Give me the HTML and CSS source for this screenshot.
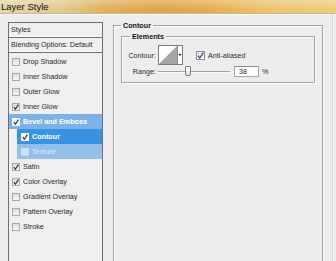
FILE: index.html
```html
<!DOCTYPE html>
<html>
<head>
<meta charset="utf-8">
<title>Layer Style</title>
<link rel="stylesheet" href="styles.css">
</head>
<body>
<div class="window">
  <div class="titlebar">Layer Style</div>
  <div class="client">
    <div class="sidebar">
      <div class="head">Styles</div>
      <div class="head">Blending Options: Default</div>
      <ul class="fx">
        <li><span class="cb"></span>Drop Shadow</li>
        <li><span class="cb"></span>Inner Shadow</li>
        <li><span class="cb"></span>Outer Glow</li>
        <li><span class="cb on"><svg viewBox="0 0 6 6"><path d="M0.8 3.2 L2.4 5.2 L5.4 0.6"/></svg></span>Inner Glow</li>
        <li class="sel1"><span class="cb on"><svg viewBox="0 0 6 6"><path d="M0.8 3.2 L2.4 5.2 L5.4 0.6"/></svg></span>Bevel and Emboss</li>
        <li class="sub sel2"><span class="cb on"><svg viewBox="0 0 6 6"><path d="M0.8 3.2 L2.4 5.2 L5.4 0.6"/></svg></span>Contour</li>
        <li class="sub sel3"><span class="cb"></span>Texture</li>
        <li><span class="cb on"><svg viewBox="0 0 6 6"><path d="M0.8 3.2 L2.4 5.2 L5.4 0.6"/></svg></span>Satin</li>
        <li><span class="cb on"><svg viewBox="0 0 6 6"><path d="M0.8 3.2 L2.4 5.2 L5.4 0.6"/></svg></span>Color Overlay</li>
        <li><span class="cb"></span>Gradient Overlay</li>
        <li><span class="cb"></span>Pattern Overlay</li>
        <li><span class="cb"></span>Stroke</li>
      </ul>
    </div>
    <fieldset class="group outer">
      <legend>Contour</legend>
      <fieldset class="group inner">
        <legend>Elements</legend>
        <div class="row r1">
          <span class="lbl">Contour:</span>
          <div class="preview">
            <svg width="25" height="20" viewBox="0 0 25 20">
              <rect x="0.5" y="0.5" width="24" height="19" fill="#fff" stroke="#7c7c7c"/>
              <polygon points="1,19 19,1 19,19" fill="#a6a6a6"/>
              <line x1="19.5" y1="1" x2="19.5" y2="19" stroke="#8c8c8c"/>
              <polygon points="20.5,9 23.5,9 22,11" fill="#111"/>
            </svg>
          </div>
          <span class="cb on big"><svg viewBox="0 0 6 6"><path d="M0.8 3.2 L2.4 5.2 L5.4 0.6"/></svg></span>
          <span class="txt">Anti-aliased</span>
        </div>
        <div class="row r2">
          <span class="lbl">Range:</span>
          <div class="slider"><div class="thumb"></div></div>
          <div class="num">38</div>
          <span class="pct">%</span>
        </div>
      </fieldset>
    </fieldset>
    <div class="edge"></div>
  </div>
</div>
</body>
</html>
```

FILE: styles.css
```css
html, body {
  margin: 0;
  padding: 0;
}
body {
  width: 336px;
  height: 261px;
  overflow: hidden;
  background: #ededed;
  font-family: "Liberation Sans", Arial, sans-serif;
  font-size: 7.2px;
  color: #2a2a2a;
}
.window {
  height: 261px;
  overflow: hidden;
}
.titlebar {
  height: 13px;
  line-height: 13px;
  padding-left: 1px;
  font-size: 9.5px;
  color: #111;
  background:
    linear-gradient(to bottom, rgba(255,255,255,0.28), rgba(255,255,255,0) 70%),
    linear-gradient(to right, #e4d4aa 0%, #e2c98e 18%, #e0b059 32%, #dea546 48%, #e4ae4f 62%, #ebc26a 78%, #eecc7c 100%);
  border-bottom: 1px solid #c8b68c;
  box-shadow: 0 1px 0 #fbfbfb;
}
.client {
  display: flex;
  align-items: flex-start;
  height: 247px;
}
.sidebar {
  margin: 8px 0 0 8px;
  width: 93px;
  height: 250px;
  flex: none;
  border: 1px solid #707070;
  background: #efefef;
}
.head {
  height: 14px;
  line-height: 14px;
  padding-left: 2px;
  border-bottom: 1px solid #707070;
  box-shadow: inset 0 -1px 0 #fafafa;
}
.fx {
  list-style: none;
  margin: 1px 0 0 0;
  padding: 0;
}
.fx li {
  height: 15px;
  display: flex;
  align-items: center;
  padding-left: 3px;
}
.fx li.sub {
  margin-left: 8px;
  padding-left: 4px;
}
.sel1 {
  background: #7db2e8;
  color: #fff;
  font-weight: bold;
}
.sel2 {
  background: #3893e5;
  color: #fff;
  font-weight: bold;
}
.sel3 {
  background: #93bfea;
  color: #deebf8;
}
.cb {
  flex: none;
  width: 6px;
  height: 6px;
  border: 1px solid #a8a8a8;
  background: linear-gradient(#dcdcdc, #f7f7f7);
  margin-right: 3px;
  display: flex;
}
.cb svg {
  width: 6px;
  height: 6px;
}
.cb svg path {
  fill: none;
  stroke: #2a2a2a;
  stroke-width: 1.1;
}
.sel1 .cb, .sel2 .cb {
  background: #fff;
  border-color: #ffffff;
}
.sel3 .cb {
  background: #cfe2f5;
  border-color: #c6dbf0;
}
.group {
  margin: 0;
  min-width: 0;
  border: 1px solid #a4a4a4;
  box-shadow: 1px 1px 0 #fbfbfb, inset 1px 1px 0 #fbfbfb;
}
.group legend {
  font-weight: bold;
  line-height: 9px;
  padding: 0 2px;
  color: #111;
}
.outer {
  margin: 7px 0 0 10px;
  padding: 0 7px;
  width: 194px;
  height: 260px;
  flex: none;
}
.inner {
  margin-top: 2px;
  padding: 0 4px 5px 4px;
}
.inner > legend {
  margin-left: 4px;
}
.row {
  display: flex;
  align-items: center;
}
.r1 {
  margin-top: 4px;
  height: 20px;
}
.r2 {
  margin-top: 1px;
  height: 11px;
}
.lbl {
  width: 30px;
  text-align: right;
  flex: none;
}
.preview {
  margin-left: 2px;
  width: 25px;
  height: 20px;
  flex: none;
}
.preview svg {
  display: block;
}
.cb.big {
  width: 7px;
  height: 7px;
  margin-left: 13px;
  margin-right: 3px;
  border-color: #8e8e8e;
  background: linear-gradient(#e6e6e6, #fbfbfb);
}
.cb.big svg {
  width: 7px;
  height: 7px;
}
.cb.big svg path {
  stroke: #3a4f8a;
}
.slider {
  position: relative;
  margin-left: 2px;
  width: 72px;
  height: 11px;
  flex: none;
}
.slider::before {
  content: "";
  display: block;
  margin-top: 5px;
  height: 1px;
  background: #a2a2a2;
  border-bottom: 1px solid #fbfbfb;
}
.thumb {
  position: absolute;
  left: 27px;
  top: 0;
  width: 4px;
  height: 8px;
  border: 1px solid #7a7a7a;
  border-radius: 1px 1px 2px 2px;
  background: linear-gradient(#fdfdfd, #e2e2e2);
}
.num {
  margin-left: 4px;
  width: 19px;
  height: 9px;
  line-height: 9px;
  padding-left: 4px;
  border: 1px solid #a8a8a8;
  border-top-color: #8a8a8a;
  background: #fff;
  flex: none;
}
.pct {
  margin-left: 3px;
}
.edge {
  margin-left: 9px;
  width: 1px;
  height: 247px;
  background: #d6d6d6;
  box-shadow: 1px 0 0 #f8f8f8;
  flex: none;
}
```
